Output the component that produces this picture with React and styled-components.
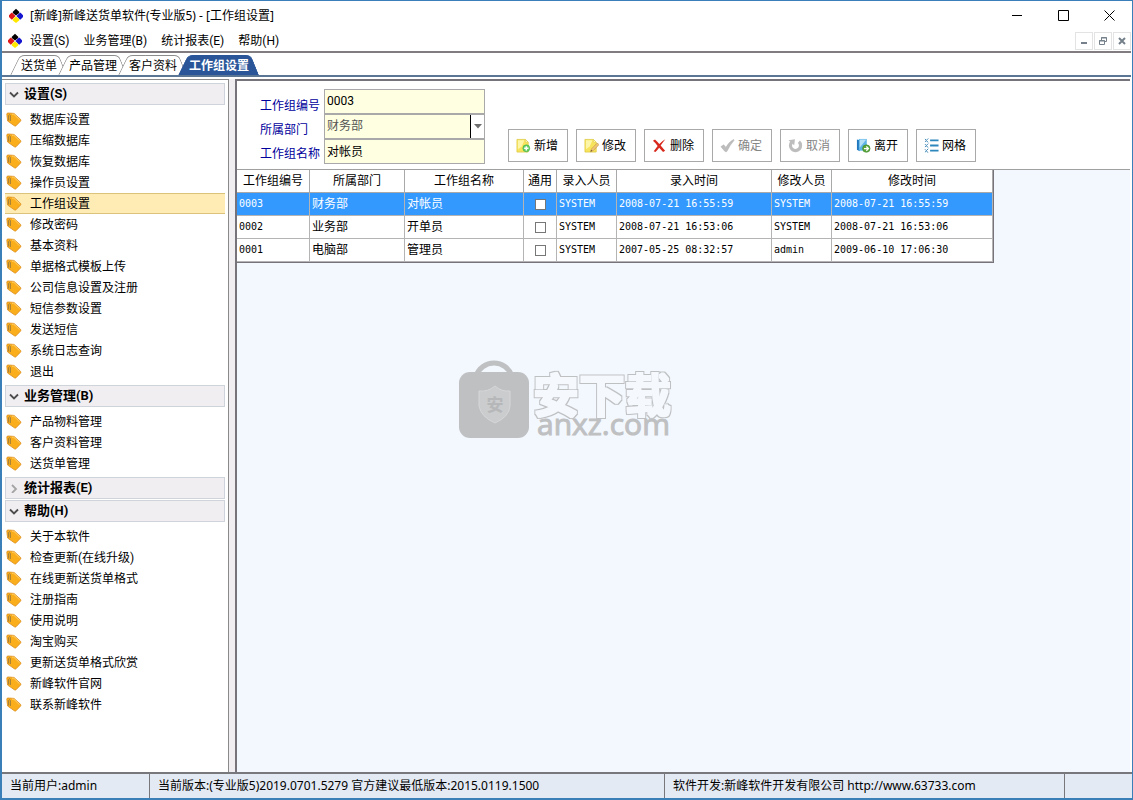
import { useState } from "react";
import styled, { createGlobalStyle, css } from "styled-components";

const GlobalStyle = createGlobalStyle`
  * {
    box-sizing: border-box;
  }

  body {
    margin: 0;
    font-family: Roboto, "Noto Sans CJK SC", sans-serif;
    font-size: 12px;
    line-height: 16px;
    color: #000;
  }

  button, input, select {
    font: inherit;
    color: inherit;
    margin: 0;
  }
`;

const Window = styled.div`
  position: relative;
  display: flex;
  flex-direction: column;
  min-height: 100vh;
  background-color: #fff;
  border: 1px solid #3b7fb8;
  border-left-width: 2px;
  border-bottom-width: 2px;
`;

const TitleBar = styled.header`
  display: flex;
  align-items: center;
  height: 29px;
  padding-left: 6px;
`;

const Title = styled.h1`
  flex: 1;
  margin: 0 0 0 6px;
  font-family: "Noto Sans", "Noto Sans CJK SC", sans-serif;
  font-size: 12px;
  font-weight: 400;
`;

const WindowButton = styled.button`
  all: unset;
  display: flex;
  align-items: center;
  justify-content: center;
  width: 46px;
  height: 29px;
`;

const MenuBar = styled.nav`
  display: flex;
  align-items: center;
  height: 21px;
  padding-left: 5px;
`;

const MenuList = styled.div`
  flex: 1;
  display: flex;
  gap: 14px;
  margin-left: 7px;
`;

const MenuButton = styled.button`
  all: unset;
`;

const ChildButton = styled.button`
  display: flex;
  align-items: center;
  justify-content: center;
  width: 18px;
  height: 18px;
  margin-right: 1px;
  padding: 0;
  background-color: #fff;
  border: 1px solid #e3e3e3;
`;

const TabStrip = styled.div`
  display: flex;
  align-items: flex-end;
  height: 26px;
  margin-right: 1px;
  padding-left: 13px;
  border-top: 2px solid #807c80;
  border-bottom: 2px solid #5b7595;
`;

const Tab = styled.button`
  all: unset;
  position: relative;
  z-index: 0;
  height: 20px;
  line-height: 22px;
  padding: 0 6px;
  color: ${(props) => (props.$active ? "#fff" : "#000")};
  font-weight: ${(props) => (props.$active ? 700 : 400)};

  /* slanted sides, one half each */
  &::before,
  &::after {
    content: "";
    position: absolute;
    z-index: -1;
    top: 0;
    bottom: 0;
    width: 55%;
    background-color: ${(props) => (props.$active ? "#2a5699" : "#fff")};
    border-top: 1px solid ${(props) => (props.$active ? "#2a5699" : "#8c8c8c")};
  }

  &::before {
    left: 0;
    border-left: 1px solid
      ${(props) => (props.$active ? "#2a5699" : "#8c8c8c")};
    border-top-left-radius: 5px;
    transform: skewX(-26deg);
  }

  &::after {
    right: 0;
    border-right: 1px solid
      ${(props) => (props.$active ? "#2a5699" : "#8c8c8c")};
    border-top-right-radius: 5px;
    transform: skewX(22deg);
  }
`;

const Body = styled.div`
  flex: 1;
  display: flex;
  gap: 6px;
  padding: 2px 2px 0 0;
`;

const Sidebar = styled.aside`
  flex: none;
  width: 227px;
  padding: 3px 3px 0;
  border-top: 1px solid #8a8a8a;
  border-right: 1px solid #8a8a8a;
  box-shadow: 6px 0 0 #f0eef1;
`;

const Group = styled.section`
  margin-bottom: ${(props) => (props.$open ? 3 : 1)}px;
`;

const GroupHeader = styled.button`
  display: flex;
  align-items: center;
  gap: 5px;
  width: 100%;
  height: 22px;
  padding: 0 0 1px 3px;
  font-size: 13px;
  font-weight: 700;
  text-align: left;
  background-color: #f0eef1;
  border: 1px solid #cfd3da;
`;

const GroupList = styled.ul`
  list-style: none;
  margin: 4px 0 0;
  padding: 0;
`;

const NavLink = styled.a`
  display: flex;
  align-items: center;
  gap: 8px;
  height: 21px;
  padding-left: 1px;
  color: #000;
  text-decoration: none;
  border: solid transparent;
  border-width: 1px 0;

  ${(props) =>
    props.$active &&
    css`
      background-color: #ffecb5;
      border-color: #dcc37c;
    `}
`;

const Main = styled.main`
  flex: 1;
  min-width: 0;
  background-color: #f3f8fe;
  border-top: 2px solid #77737a;
  border-left: 2px solid #77737a;
`;

const FormPanel = styled.div`
  display: flex;
  align-items: flex-start;
  padding: 8px 0 4px 23px;
  background-color: #fff;
  border-bottom: 1px solid #a0a0a0;
`;

const Labels = styled.div`
  display: flex;
  flex-direction: column;
  width: 64px;
  padding-top: 4px;
  color: #00009c;
`;

const Label = styled.label`
  height: 24px;
  line-height: 26px;
`;

const Fields = styled.div`
  display: flex;
  flex-direction: column;
  width: 161px;
`;

const TextField = styled.input`
  width: 100%;
  height: 25px;
  padding: 0 2px 2px;
  background-color: #ffffe1;
  border: 1px solid #a9a9a9;
`;

const Combo = styled.div`
  display: flex;
  height: 25px;
  border: 1px solid #a9a9a9;
`;

const Select = styled.select`
  appearance: none;
  flex: 1;
  padding: 0 2px 2px;
  color: #555;
  background-color: #ffffe1;
  border: 0;
  border-right: 1px solid #000;
  border-radius: 0;
`;

const ComboArrow = styled.span`
  display: flex;
  align-items: center;
  justify-content: center;
  width: 13px;
  background-color: #fff;
`;

const Toolbar = styled.div`
  display: flex;
  gap: 8px;
  margin: 40px 0 0 23px;
`;

const ToolButton = styled.button`
  display: flex;
  align-items: center;
  gap: 3px;
  width: 60px;
  height: 33px;
  padding: 0 0 0 7px;
  white-space: nowrap;
  background-color: #fff;
  border: 1px solid #a9a9a9;

  &:disabled {
    color: #858585;
  }
`;

const Table = styled.table`
  table-layout: fixed;
  width: 756px;
  border-collapse: separate;
  border-spacing: 0;
  background-color: #fff;
  border-right: 1px solid #77737a;
  border-bottom: 1px solid #77737a;
`;

const Th = styled.th`
  height: 23px;
  padding: 0;
  font-weight: 400;
  border-right: 1px solid #a9a9a9;
  border-bottom: 1px solid #a9a9a9;
`;

const Td = styled.td`
  height: 23px;
  padding: ${(props) => (props.$center ? 0 : "0 0 0 2px")};
  white-space: nowrap;
  border-right: 1px solid #b4b4b4;
  border-bottom: 1px solid #b4b4b4;
  ${(props) =>
    props.$mono &&
    css`
      font-family: "DejaVu Sans Mono", monospace;
      font-size: 10px;
    `}
`;

const Row = styled.tr`
  color: ${(props) => (props.$selected ? "#fff" : "#000")};
  background-color: ${(props) => (props.$selected ? "#3399ff" : "#fff")};
`;

const Check = styled.input`
  appearance: none;
  display: block;
  width: 11px;
  height: 11px;
  margin: 0 auto;
  background-color: #fff;
  border: 1px solid #777;
`;

const Watermark = styled.div`
  position: absolute;
  left: 50%;
  top: 50%;
  transform: translate(-50%, -50%);
  pointer-events: none;

  svg {
    display: block;
  }
`;

const StatusBar = styled.footer`
  display: grid;
  grid-template-columns: 148fr 515fr 400fr 67fr;
  height: 26px;
  font-family: "Noto Sans", "Noto Sans CJK SC", sans-serif;
  background-color: #e4eaf3;
  border-top: 2px solid #77777c;
`;

const StatusCell = styled.div`
  min-width: 0;
  padding: 4px 8px;
  white-space: nowrap;
  border-right: 1px solid #77777c;

  &:last-child {
    border-right: 0;
  }
`;

const groups = [
  {
    title: "设置(S)",
    open: true,
    items: [
      "数据库设置",
      "压缩数据库",
      "恢复数据库",
      "操作员设置",
      "工作组设置",
      "修改密码",
      "基本资料",
      "单据格式模板上传",
      "公司信息设置及注册",
      "短信参数设置",
      "发送短信",
      "系统日志查询",
      "退出",
    ],
  },
  {
    title: "业务管理(B)",
    open: true,
    items: ["产品物料管理", "客户资料管理", "送货单管理"],
  },
  { title: "统计报表(E)", open: false, items: [] },
  {
    title: "帮助(H)",
    open: true,
    items: [
      "关于本软件",
      "检查更新(在线升级)",
      "在线更新送货单格式",
      "注册指南",
      "使用说明",
      "淘宝购买",
      "更新送货单格式欣赏",
      "新峰软件官网",
      "联系新峰软件",
    ],
  },
];

const tabs = ["送货单", "产品管理", "客户资料", "工作组设置"];

const columns = [
  { name: "工作组编号", width: 73 },
  { name: "所属部门", width: 95 },
  { name: "工作组名称", width: 119 },
  { name: "通用", width: 33 },
  { name: "录入人员", width: 60 },
  { name: "录入时间", width: 155 },
  { name: "修改人员", width: 60 },
  { name: "修改时间", width: 161 },
];

const rows = [
  ["0003", "财务部", "对帐员", "SYSTEM", "2008-07-21 16:55:59", "SYSTEM", "2008-07-21 16:55:59"],
  ["0002", "业务部", "开单员", "SYSTEM", "2008-07-21 16:53:06", "SYSTEM", "2008-07-21 16:53:06"],
  ["0001", "电脑部", "管理员", "SYSTEM", "2007-05-25 08:32:57", "admin", "2009-06-10 17:06:30"],
];

function Logo() {
  return (
    <svg width="16" height="16" viewBox="0 0 16 16">
      <path d="M8 .8 L11.2 3.8 V5 L8 7.6 L4.8 5 V3.8 Z" fill="#000" />
      <path d="M4.2 4.8 L7.6 8 L4.2 11.4 H3.4 L1 9 V7.2 L3.4 4.8 Z" fill="#e01818" />
      <path d="M11.8 4.8 L8.4 8 L11.8 11.4 H12.6 L15 9 V7.2 L12.6 4.8 Z" fill="#1515d0" />
      <path d="M8 8.4 L11.2 11 V12.4 L8 15 L4.8 12.4 V11 Z" fill="#ffe800" />
    </svg>
  );
}

function TagIcon() {
  return (
    <svg width="16" height="16" viewBox="0 0 16 16">
      <path
        d="M.8 2.2 Q.8 1 2 1 L8 1.4 L14.6 7.4 Q15.2 8.2 14.6 9 L10 13.8 Q9.2 14.4 8.4 13.8 L1.6 9 Z"
        fill="#fbae1c"
        stroke="#d98b1a"
        strokeWidth=".8"
      />
      <path d="M6 2.2 H7.8 L13.6 7.8" fill="none" stroke="#ffd270" />
      <path d="M2.6 8.5 V3.4 Q3.4 2 4.4 3.4 V9" fill="none" stroke="#96783c" strokeWidth=".9" />
    </svg>
  );
}

function Chevron({ open }) {
  return (
    <svg width="10" height="10" viewBox="0 0 10 10" fill="none" strokeWidth="1.8">
      {open ? (
        <path d="M1 3.5 L5 7.5 L9 3.5" stroke="#4c4c4c" />
      ) : (
        <path d="M3 2 L7 6 L3 10" stroke="#a4a4a4" />
      )}
    </svg>
  );
}

function Note() {
  return (
    <>
      <path d="M1 1.5 H10 L13 4.5 V15 H1 Z" fill="#f8e45c" stroke="#dcc840" strokeWidth=".8" />
      <path d="M2 2.5 H9 L6 9 L2 12 Z" fill="#fdf6a9" />
      <path d="M10 1.5 V4.5 H13 Z" fill="#fffbd8" stroke="#dcc840" strokeWidth=".6" />
    </>
  );
}

const toolIcons = {
  add: (
    <>
      <Note />
      <circle cx="11" cy="11" r="3.7" fill="#62cf63" stroke="#3fae4a" strokeWidth=".6" />
      <path d="M11 8.7 V13.3 M8.7 11 H13.3" stroke="#fff" strokeWidth="1.6" />
    </>
  ),
  edit: (
    <>
      <Note />
      <path d="M7 14.5 L8 11.6 L14.2 5.3 L16 7.1 L9.8 13.5 Z" fill="#f0c676" stroke="#b98a44" strokeWidth=".6" />
      <path d="M7 14.5 L7.6 12.8 L8.7 13.9 Z" fill="#4a3a28" />
    </>
  ),
  remove: (
    <path
      d="M1 3 L3.2 1.7 Q5.5 3.8 7.8 6.5 Q10.8 3 14.2 1.3 Q11.5 4.7 9.2 8.1 L14 13.5 L11.8 15 L7.6 10.3 Q5.6 13 3.7 15 L1.8 14.2 Q4 11 6 8.4 Q3.4 5 1 3 Z"
      fill="#d8291d"
    />
  ),
  ok: (
    <path
      d="M1 9.2 L4 7.3 L6.3 10 Q9 4.5 14.5 1.5 L15 2.5 Q10.5 7.5 7.2 14.5 H5.4 Z"
      fill="#bdbdbd"
      stroke="#aaa"
      strokeWidth=".5"
    />
  ),
  cancel: (
    <>
      <path d="M4 4.4 A5.4 5.4 0 1 0 11.6 4" fill="none" stroke="#bdbdbd" strokeWidth="3.4" />
      <path d="M.6 2.4 L7.4 1.4 L6.6 7.6 Z" fill="#bdbdbd" />
    </>
  ),
  leave: (
    <>
      <path d="M1 1.5 L4 2.5 V14 L1 12.5 Z" fill="#1f78bd" />
      <path d="M3 1 H11.5 V13.5 H3 Z" fill="#5fb4e8" />
      <path d="M4 1.5 H11 L4 10 Z" fill="#b5e0f8" />
      <circle cx="11" cy="11.3" r="4" fill="#5aa53b" stroke="#40842a" strokeWidth=".6" />
      <path d="M8.5 11.3 H13 M11 9 L13.3 11.3 L11 13.6" fill="none" stroke="#fff" strokeWidth="1.4" />
    </>
  ),
  grid: (
    <>
      <path
        d="M1 1 L2.5 2.5 L4.5 .5 M1 4 L2.5 3 L4.5 4.5 M1 6.5 L2.5 8 L4.5 6 M1 9.5 L2.5 8.5 L4.5 10 M1 12 L2.5 13.5 L4.5 11.5 M1 15 L2.5 14 L4.5 15.5"
        fill="none"
        stroke="#3d86b5"
      />
      <path d="M6.5 2.5 H15.5 M6.5 8 H15.5 M6.5 13.5 H15.5" stroke="#2d87bd" strokeWidth="2" />
    </>
  ),
};

const tools = [
  { icon: "add", text: "新增" },
  { icon: "edit", text: "修改" },
  { icon: "remove", text: "删除" },
  { icon: "ok", text: "确定", disabled: true },
  { icon: "cancel", text: "取消", disabled: true },
  { icon: "leave", text: "离开" },
  { icon: "grid", text: "网格" },
];

function SiteMark() {
  return (
    <Watermark>
      <svg width="220" height="88" viewBox="0 0 220 88">
        <defs>
          <filter id="outline" x="-5%" y="-10%" width="110%" height="120%">
            <feMorphology in="SourceAlpha" operator="dilate" radius="2" result="wide" />
            <feFlood floodColor="#bfc0c2" />
            <feComposite in2="wide" operator="in" result="edge" />
            <feMorphology in="SourceAlpha" operator="dilate" radius="1" result="thin" />
            <feFlood floodColor="#f5f9fe" />
            <feComposite in2="thin" operator="in" result="face" />
            <feMerge>
              <feMergeNode in="edge" />
              <feMergeNode in="face" />
            </feMerge>
          </filter>
        </defs>
        <path d="M19 20 A19 19 0 0 1 55 20" fill="none" stroke="#bfc0c2" strokeWidth="5" />
        <rect x="2" y="16" width="70" height="66" rx="11" fill="#bfc0c2" />
        <path
          d="M38 30 Q45 36 53 35 V50 Q52 61 38 67 Q24 61 22 50 V35 Q31 36 38 30 Z"
          fill="#cbccce"
          stroke="#d6d7d9"
        />
        <text x="38" y="55" textAnchor="middle" fontSize="17" fontWeight="700" fill="#b6b7b9">
          安
        </text>
        <text x="76" y="56" fontSize="46" fontWeight="700" filter="url(#outline)">
          安下载
        </text>
        <text x="80" y="79" fontFamily="Open Sans, sans-serif" fontSize="30" fill="#bfc0c2" stroke="#bfc0c2">
          anxz.com
        </text>
      </svg>
    </Watermark>
  );
}

function NavGroup({ group, current, setCurrent }) {
  const [open, setOpen] = useState(group.open);

  return (
    <Group $open={open}>
      <GroupHeader onClick={() => setOpen(!open)} aria-expanded={open}>
        <Chevron open={open} />
        {group.title}
      </GroupHeader>
      {open && (
        <GroupList>
          {group.items.map((item) => (
            <li key={item}>
              <NavLink
                href="#"
                $active={item === current}
                onClick={(e) => {
                  e.preventDefault();
                  setCurrent(item);
                }}
              >
                <TagIcon />
                {item}
              </NavLink>
            </li>
          ))}
        </GroupList>
      )}
    </Group>
  );
}

function GroupTable({ selected, setSelected }) {
  return (
    <Table>
      <colgroup>
        {columns.map((col) => (
          <col key={col.name} width={col.width} />
        ))}
      </colgroup>
      <thead>
        <tr>
          {columns.map((col) => (
            <Th key={col.name}>{col.name}</Th>
          ))}
        </tr>
      </thead>
      <tbody>
        {rows.map((row) => (
          <Row
            key={row[0]}
            $selected={row[0] === selected}
            onClick={() => setSelected(row[0])}
          >
            <Td $mono>{row[0]}</Td>
            <Td>{row[1]}</Td>
            <Td>{row[2]}</Td>
            <Td $center>
              <Check type="checkbox" aria-label="通用" />
            </Td>
            {row.slice(3).map((value, i) => (
              <Td key={i} $mono>
                {value}
              </Td>
            ))}
          </Row>
        ))}
      </tbody>
    </Table>
  );
}

function App() {
  const [current, setCurrent] = useState("工作组设置");
  const [tab, setTab] = useState("工作组设置");
  const [selected, setSelected] = useState("0003");

  return (
    <>
      <GlobalStyle />
      <Window>
        <TitleBar>
          <Logo />
          <Title>[新峰]新峰送货单软件(专业版5) - [工作组设置]</Title>
          <WindowButton aria-label="最小化">
            <svg width="11" height="11" stroke="#000">
              <path d="M0 5.5 H10" />
            </svg>
          </WindowButton>
          <WindowButton aria-label="最大化">
            <svg width="11" height="11" stroke="#000" fill="none">
              <path d="M.5 .5 H10.5 V10.5 H.5 Z" />
            </svg>
          </WindowButton>
          <WindowButton aria-label="关闭">
            <svg width="11" height="11" stroke="#000">
              <path d="M.5 .5 L10.5 10.5 M10.5 .5 L.5 10.5" />
            </svg>
          </WindowButton>
        </TitleBar>

        <MenuBar>
          <Logo />
          <MenuList>
            <MenuButton>设置(S)</MenuButton>
            <MenuButton>业务管理(B)</MenuButton>
            <MenuButton>统计报表(E)</MenuButton>
            <MenuButton>帮助(H)</MenuButton>
          </MenuList>
          <ChildButton aria-label="最小化窗口">
            <svg width="8" height="8" stroke="#75808a" strokeWidth="2">
              <path d="M1 6 H7" />
            </svg>
          </ChildButton>
          <ChildButton aria-label="还原窗口">
            <svg width="8" height="8" stroke="#75808a" fill="none">
              <path d="M2.5 3 V.5 H7.5 V4.5 H6 M2 1 H8 M.5 3.5 H5.5 V7.5 H.5 Z M0 4 H6" />
            </svg>
          </ChildButton>
          <ChildButton aria-label="关闭窗口">
            <svg width="8" height="8" stroke="#75808a" strokeWidth="2">
              <path d="M1 1 L7 7 M7 1 L1 7" />
            </svg>
          </ChildButton>
        </MenuBar>

        <TabStrip role="tablist">
          {tabs.map((name) => (
            <Tab
              key={name}
              role="tab"
              aria-selected={name === tab}
              $active={name === tab}
              onClick={() => setTab(name)}
            >
              {name}
            </Tab>
          ))}
        </TabStrip>

        <Body>
          <Sidebar>
            {groups.map((group) => (
              <NavGroup
                key={group.title}
                group={group}
                current={current}
                setCurrent={setCurrent}
              />
            ))}
          </Sidebar>
          <Main>
            <FormPanel>
              <Labels>
                <Label htmlFor="code">工作组编号</Label>
                <Label htmlFor="dept">所属部门</Label>
                <Label htmlFor="name">工作组名称</Label>
              </Labels>
              <Fields>
                <TextField id="code" defaultValue="0003" />
                <Combo>
                  <Select id="dept" defaultValue="财务部">
                    <option>财务部</option>
                    <option>业务部</option>
                    <option>电脑部</option>
                  </Select>
                  <ComboArrow>
                    <svg width="8" height="5">
                      <path d="M0 0 H8 L4 4.5 Z" fill="#6d6d6d" />
                    </svg>
                  </ComboArrow>
                </Combo>
                <TextField id="name" defaultValue="对帐员" />
              </Fields>
              <Toolbar>
                {tools.map((tool) => (
                  <ToolButton key={tool.text} disabled={tool.disabled}>
                    <svg width="15" height="15" viewBox="0 0 16 16">
                      {toolIcons[tool.icon]}
                    </svg>
                    {tool.text}
                  </ToolButton>
                ))}
              </Toolbar>
            </FormPanel>
            <GroupTable selected={selected} setSelected={setSelected} />
          </Main>
        </Body>

        <StatusBar>
          <StatusCell>当前用户:admin</StatusCell>
          <StatusCell>
            当前版本:(专业版5)2019.0701.5279 官方建议最低版本:2015.0119.1500
          </StatusCell>
          <StatusCell>
            软件开发:新峰软件开发有限公司 http://www.63733.com
          </StatusCell>
          <StatusCell />
        </StatusBar>

        <SiteMark />
      </Window>
    </>
  );
}

export default App;
